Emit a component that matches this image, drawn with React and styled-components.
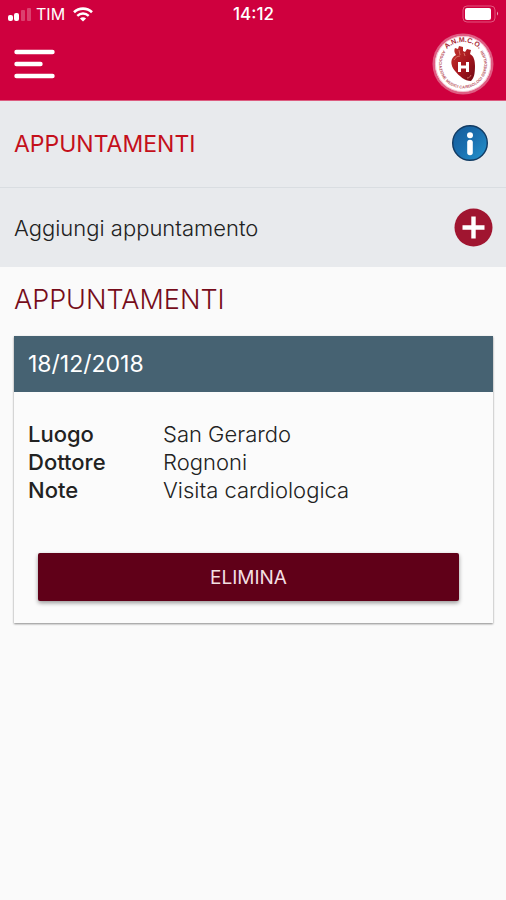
import React from 'react';
import styled, { createGlobalStyle } from 'styled-components';

const GlobalStyle = createGlobalStyle`
  * {
    box-sizing: border-box;
  }

  body {
    margin: 0;
    background: #fafafa;
    color: #222;
    font-family: Inter, 'Open Sans', sans-serif;
    font-size: 20px;
    font-weight: 300;
  }
`;

const Header = styled.header`
  background: #cf003e;
  color: #fff;
  border-bottom: 1px solid #dc5c80;
`;

const StatusBar = styled.div`
  display: grid;
  grid-template-columns: 1fr auto 1fr;
  align-items: center;
  height: 28px;
  padding: 0 7px 0 8px;
  font-size: 16px;
  font-weight: 400;
`;

const Carrier = styled.div`
  display: flex;
  align-items: center;
  gap: 5px;
`;

const Clock = styled.time`
  font-size: 17px;
  font-weight: 500;
`;

const Battery = styled.svg`
  justify-self: end;
`;

const Toolbar = styled.div`
  display: flex;
  justify-content: space-between;
  align-items: center;
  height: 72px;
  padding: 0 12px 0 14px;
`;

const IconButton = styled.button`
  display: flex;
  padding: 0;
  border: 0;
  background: none;
  cursor: pointer;
`;

const Bar = styled.div`
  display: flex;
  justify-content: space-between;
  align-items: center;
  height: ${({ $tall }) => ($tall ? '87px' : '79px')};
  padding: 0 ${({ $tall }) => ($tall ? '17px' : '13px')} 0 14px;
  background: #e8eaed;
  border-bottom: ${({ $tall }) => ($tall ? '1px solid #d9dde1' : '0')};
`;

const PageTitle = styled.h1`
  margin: 0;
  color: #c4101b;
  font-size: 23px;
  font-weight: 400;
`;

const BarText = styled.span`
  font-size: 22px;
`;

const Content = styled.main`
  padding: 17px 13px 16px 14px;
`;

const SectionTitle = styled.h2`
  margin: 0 0 20px;
  color: #760c1a;
  font-size: 27px;
  font-weight: 300;
  line-height: 32px;
`;

const Card = styled.article`
  background: #fbfbfb;
  box-shadow: 0 1px 2px rgba(0, 0, 0, 0.45);
`;

const CardHeader = styled.h3`
  margin: 0;
  padding: 0 14px;
  background: #466272;
  color: #fff;
  font-size: 23px;
  font-weight: 400;
  line-height: 56px;
`;

const Details = styled.dl`
  display: grid;
  grid-template-columns: 135px 1fr;
  margin: 0;
  padding: 28px 14px 49px;
  line-height: 28px;
`;

const Label = styled.dt`
  font-size: 22px;
  font-weight: 500;
`;

const Value = styled.dd`
  margin: 0;
  font-size: 22px;
`;

const Actions = styled.div`
  display: flex;
  padding: 0 34px 22px 24px;
`;

const DeleteButton = styled.button`
  flex: 1;
  height: 48px;
  border: 0;
  border-radius: 2px;
  background: #600018;
  color: #f3dfe2;
  font-family: inherit;
  font-size: 19px;
  font-weight: 400;
  box-shadow: 0 2px 4px rgba(0, 0, 0, 0.4);
  cursor: pointer;
`;

const SignalIcon = () => (
  <svg width='23' height='14' viewBox='0 0 23 14' fill='#fff'>
    <rect x='0' y='8' width='5' height='6' rx='2' />
    <rect x='6' y='6' width='5' height='8' rx='2' />
    <rect x='13' y='3' width='4' height='11' rx='1' opacity='0.25' />
    <rect x='19' y='1' width='4' height='13' rx='1' opacity='0.25' />
  </svg>
);

const WifiIcon = () => (
  <svg width='24' height='15' viewBox='-3 0 24 15' fill='none' stroke='#fff'>
    <path d='M1 5.2a13 13 0 0 1 18 0' strokeWidth='2.6' />
    <path d='M4.3 8.8a8.3 8.3 0 0 1 11.4 0' strokeWidth='2.4' />
    <path d='M10 14.6 6.9 11.6a4.6 4.6 0 0 1 6.2 0z' fill='#fff' stroke='none' />
  </svg>
);

const BatteryIcon = () => (
  <Battery width='37' height='18' viewBox='0 0 37 18'>
    <rect x='1' y='1' width='32' height='16' rx='4' fill='none' stroke='#e2557e' />
    <rect x='3' y='3' width='26' height='12' rx='2' fill='#fff' />
    <path d='M35 6.5v4a2.5 2.5 0 0 0 0-4z' fill='#f0a3b8' />
  </Battery>
);

const MenuIcon = () => (
  <svg width='41' height='30' viewBox='0 0 41 30' stroke='#fff' strokeWidth='4.4' strokeLinecap='round'>
    <path d='M2.5 3h36M2.5 15h24M2.5 27h36' />
  </svg>
);

const Logo = () => (
  <svg width='62' height='62' viewBox='0 0 62 62' fontFamily='Liberation Sans, sans-serif' fontWeight='700'>
    <defs>
      <path id='ring-top' d='M9 31a22 22 0 0 1 44 0' />
      <path id='ring-bottom' d='M12.3 18A23 23 0 1 0 49.7 18' />
      <linearGradient id='heart' x1='0' y1='0' x2='1' y2='1'>
        <stop offset='0' stopColor='#c4372f' />
        <stop offset='0.55' stopColor='#a5151d' />
        <stop offset='1' stopColor='#6e0a14' />
      </linearGradient>
    </defs>
    <circle cx='31' cy='31' r='30.5' fill='#df5d83' />
    <circle cx='31' cy='31' r='28' fill='#fff' />
    <circle cx='31' cy='31' r='27.6' fill='none' stroke='#efb6c4' strokeWidth='0.8' />
    <text fill='#a92a35' fontSize='7'>
      <textPath href='#ring-top' startOffset='50%' textAnchor='middle'>A.N.M.C.O.</textPath>
    </text>
    <text fill='#b8505c' fontSize='4' dominantBaseline='middle'>
      <textPath href='#ring-bottom' startOffset='50%' textAnchor='middle'>
        ASSOCIAZIONE MEDICI CARDIOLOGI OSPEDALIERI
      </textPath>
    </text>
    <path
      d='M24 22c-2-3-2-5-1-7l3 1 1-3 4 1 0 4 2 1 2-3 4 1-1 4c4 2 5 7 5 12 0 8-1 12-4 15-6 0-12-5-16-10-5-6-5-13 1-16z'
      fill='url(#heart)'
    />
    <path d='M27 17l1 5M32 20l1 3M22 27c1-2 3-4 6-4M39 42c-1 2-2 3-4 3' fill='none' stroke='#dd786a' strokeWidth='0.9' />
    <path d='M27.5 29v10M35.5 29v10M28 34h8' fill='none' stroke='#fff' strokeWidth='3' />
  </svg>
);

const InfoIcon = () => (
  <svg width='38' height='38' viewBox='0 0 38 38'>
    <defs>
      <linearGradient id='info' x1='0' y1='0' x2='1' y2='1'>
        <stop offset='0' stopColor='#155b99' />
        <stop offset='0.5' stopColor='#1a70b0' />
        <stop offset='1' stopColor='#2597cf' />
      </linearGradient>
    </defs>
    <circle cx='19' cy='18' r='17.3' fill='url(#info)' stroke='#123b63' strokeWidth='1.4' />
    <circle cx='19' cy='10.3' r='3' fill='#fff' />
    <path d='M19 17.5v10' stroke='#fff' strokeWidth='5.6' strokeLinecap='round' />
  </svg>
);

const PlusIcon = () => (
  <svg width='39' height='39' viewBox='0 0 39 39'>
    <circle cx='19.5' cy='19.5' r='19' fill='#a01530' />
    <path d='M19.5 8.5v22M8.5 19.5h22' stroke='#fff' strokeWidth='4.4' />
  </svg>
);

const appointments = [
  {
    date: '18/12/2018',
    details: [
      ['Luogo', 'San Gerardo'],
      ['Dottore', 'Rognoni'],
      ['Note', 'Visita cardiologica'],
    ],
  },
];

const Appointment = ({ date, details }) => (
  <Card>
    <CardHeader>{date}</CardHeader>
    <Details>
      {details.map(([label, value]) => (
        <React.Fragment key={label}>
          <Label>{label}</Label>
          <Value>{value}</Value>
        </React.Fragment>
      ))}
    </Details>
    <Actions>
      <DeleteButton type='button'>ELIMINA</DeleteButton>
    </Actions>
  </Card>
);

const App = () => {
  return (
    <>
      <GlobalStyle />
      <Header>
        <StatusBar>
          <Carrier>
            <SignalIcon />
            <span>TIM</span>
            <WifiIcon />
          </Carrier>
          <Clock>14:12</Clock>
          <BatteryIcon />
        </StatusBar>
        <Toolbar>
          <IconButton type='button' aria-label='Menu'>
            <MenuIcon />
          </IconButton>
          <Logo />
        </Toolbar>
      </Header>
      <Bar $tall>
        <PageTitle>APPUNTAMENTI</PageTitle>
        <IconButton type='button' aria-label='Informazioni'>
          <InfoIcon />
        </IconButton>
      </Bar>
      <Bar>
        <BarText id='add-label'>Aggiungi appuntamento</BarText>
        <IconButton type='button' aria-labelledby='add-label'>
          <PlusIcon />
        </IconButton>
      </Bar>
      <Content>
        <SectionTitle>APPUNTAMENTI</SectionTitle>
        {appointments.map((item) => (
          <Appointment key={item.date} {...item} />
        ))}
      </Content>
    </>
  );
};

export default App;
